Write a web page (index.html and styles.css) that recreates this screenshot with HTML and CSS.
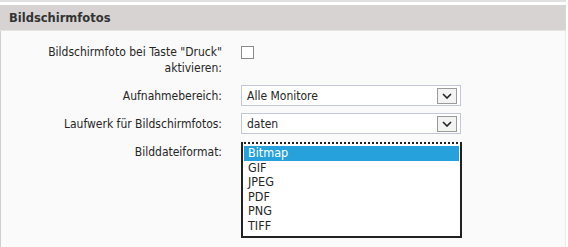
FILE: index.html
```html
<!DOCTYPE html>
<html lang="de">
<head>
    <meta charset="UTF-8">
    <title>Bildschirmfotos</title>
    <link rel="stylesheet" href="styles.css">
</head>
<body>
    <div class="topline"></div>
    <div class="panel">
        <div class="panel-head">Bildschirmfotos</div>
        <div class="panel-body">
            <div class="row row-check">
                <label class="lbl">Bildschirmfoto bei Taste "Druck"<br>aktivieren:</label>
                <div class="ctl"><span class="checkbox"></span></div>
            </div>
            <div class="row">
                <label class="lbl">Aufnahmebereich:</label>
                <div class="ctl">
                    <div class="select">
                        <span class="select-text">Alle Monitore</span>
                        <span class="select-btn">
                            <svg width="10" height="6" viewBox="0 0 10 6"><path d="M1 1 L5 5 L9 1" fill="none" stroke="#222" stroke-width="1.6"/></svg>
                        </span>
                    </div>
                </div>
            </div>
            <div class="row">
                <label class="lbl">Laufwerk für Bildschirmfotos:</label>
                <div class="ctl">
                    <div class="select">
                        <span class="select-text">daten</span>
                        <span class="select-btn">
                            <svg width="10" height="6" viewBox="0 0 10 6"><path d="M1 1 L5 5 L9 1" fill="none" stroke="#222" stroke-width="1.6"/></svg>
                        </span>
                    </div>
                </div>
            </div>
            <div class="row row-list">
                <label class="lbl">Bilddateiformat:</label>
                <div class="ctl">
                    <ul class="listbox">
                        <li class="selected">Bitmap</li>
                        <li>GIF</li>
                        <li>JPEG</li>
                        <li>PDF</li>
                        <li>PNG</li>
                        <li>TIFF</li>
                    </ul>
                </div>
            </div>
        </div>
    </div>
</body>
</html>
```

FILE: styles.css
```css
* { margin: 0; padding: 0; box-sizing: border-box; }
body {
    font-family: "DejaVu Sans Condensed", "DejaVu Sans", sans-serif;
    font-size: 12px;
    color: #262626;
    background: #fff;
}
.topline { width: 566px; height: 2px; background: #e0e0e0; }
.panel { width: 566px; margin-top: 3px; }
.panel-head {
    height: 26px;
    line-height: 26px;
    padding-left: 9px;
    background: #d6d3d2;
    border-bottom: 1px solid #e6e4e3;
    font-family: "DejaVu Sans", sans-serif;
    font-weight: bold;
    font-size: 11.5px;
    color: #333;
}
.panel-body {
    background: #fafafa;
    border-left: 1px solid #cfcfcf;
    border-right: 1px solid #ececec;
    height: 216px;
    padding-top: 13px;
}
.row {
    display: grid;
    grid-template-columns: 221px 220px;
    column-gap: 19px;
    align-items: center;
    margin-bottom: 7px;
}
.row-check { align-items: start; margin-bottom: 9px; }
.row-list { align-items: start; }
.lbl { text-align: right; line-height: 16px; }
.row-check .ctl { padding-top: 2px; }
.row-list .lbl { padding-top: 3px; }
.checkbox {
    display: block;
    width: 13px;
    height: 13px;
    background: #fff;
    border: 1px solid #8a8a8a;
}
.select {
    display: flex;
    align-items: center;
    justify-content: space-between;
    height: 21px;
    background: #fff;
    border: 1px solid #c3c6d4;
    padding: 0 3px 0 5px;
}
.select-btn {
    display: flex;
    align-items: center;
    justify-content: center;
    width: 20px;
    height: 16px;
    background: #f3f3f3;
    border: 1px solid #9a9a9a;
}
.listbox {
    list-style: none;
    width: 221px;
    height: 96px;
    background: #fff;
    border: 2px solid #222;
    border-top: 2px dotted #222;
    padding: 2px 0 2px;
    margin-top: 1px;
}
.listbox li { height: 14.6px; line-height: 14.6px; padding-left: 4px; margin: 0 1px; font-size: 12.5px; }
.listbox li.selected { background: #27a1dc; color: #fff; }
```
